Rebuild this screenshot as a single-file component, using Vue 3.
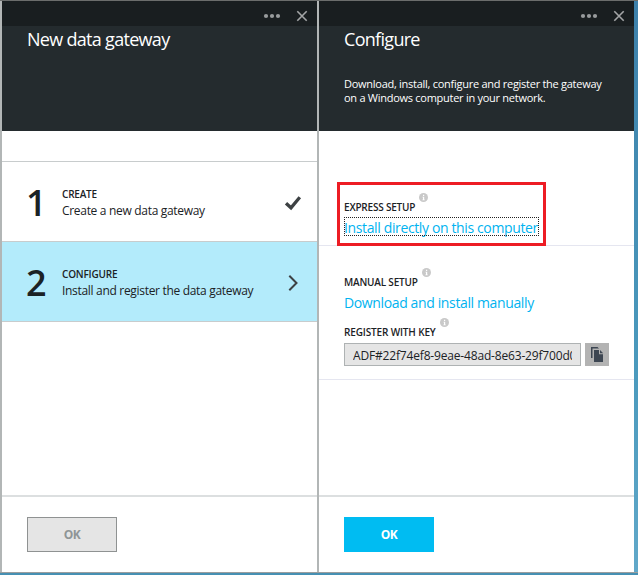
<script setup>
const steps = [
  { n: 1, label: 'CREATE', text: 'Create a new data gateway', done: true },
  { n: 2, label: 'CONFIGURE', text: 'Install and register the data gateway', done: false },
]
</script>

<template>
  <div class="desktop">
    <section class="blade">
      <header class="head">
        <div class="bar">
          <svg class="dots" width="18" height="6" viewBox="0 0 18 6"><circle cx="3" cy="3" r="2.1" /><circle cx="9" cy="3" r="2.1" /><circle cx="15" cy="3" r="2.1" /></svg>
          <svg class="close" width="12" height="12" viewBox="0 0 12 12"><path d="M1.3 1.3 10.7 10.7M10.7 1.3 1.3 10.7" /></svg>
        </div>
        <h1>New data gateway</h1>
      </header>
      <ol class="steps">
        <li v-for="s in steps" :key="s.n" class="step" :class="{ active: !s.done }">
          <span class="num">{{ s.n }}</span>
          <div class="step-body">
            <div class="step-label">{{ s.label }}</div>
            <div class="step-text">{{ s.text }}</div>
          </div>
          <svg v-if="s.done" class="mark" width="18" height="16" viewBox="0 0 18 16"><path class="check" d="M2 8.2 7 12.8 15.8 2.2" /></svg>
          <svg v-else class="mark" width="18" height="16" viewBox="0 0 18 16"><path class="chev" d="M5.3 .8 12.5 8 5.3 15.2" /></svg>
        </li>
      </ol>
      <footer class="foot"><button class="ok disabled">OK</button></footer>
    </section>

    <section class="blade">
      <header class="head">
        <div class="bar">
          <svg class="dots" width="18" height="6" viewBox="0 0 18 6"><circle cx="3" cy="3" r="2.1" /><circle cx="9" cy="3" r="2.1" /><circle cx="15" cy="3" r="2.1" /></svg>
          <svg class="close" width="12" height="12" viewBox="0 0 12 12"><path d="M1.3 1.3 10.7 10.7M10.7 1.3 1.3 10.7" /></svg>
        </div>
        <h1>Configure</h1>
        <p class="intro">Download, install, configure and register the gateway<br>on a Windows computer in your network.</p>
      </header>
      <div class="group express">
        <div class="label"><span>EXPRESS SETUP</span>
          <svg class="info" width="9" height="9" viewBox="0 0 9 9"><circle cx="4.5" cy="4.5" r="4.5" /><path d="M4 1.8h1.2v1.1H4zM3.5 3.8h1.7v2.6h.5v.8H3.4v-.8H4V4.6h-.5z" /></svg>
        </div>
        <a class="link focused">Install directly on this computer</a>
        <div class="callout"></div>
      </div>
      <div class="group manual">
        <div class="label"><span>MANUAL SETUP</span>
          <svg class="info" width="9" height="9" viewBox="0 0 9 9"><circle cx="4.5" cy="4.5" r="4.5" /><path d="M4 1.8h1.2v1.1H4zM3.5 3.8h1.7v2.6h.5v.8H3.4v-.8H4V4.6h-.5z" /></svg>
        </div>
        <a class="link">Download and install manually</a>
        <div class="label key-label"><span>REGISTER WITH KEY</span>
          <svg class="info" width="9" height="9" viewBox="0 0 9 9"><circle cx="4.5" cy="4.5" r="4.5" /><path d="M4 1.8h1.2v1.1H4zM3.5 3.8h1.7v2.6h.5v.8H3.4v-.8H4V4.6h-.5z" /></svg>
        </div>
        <div class="key-row">
          <div class="key"><span>ADF#22f74ef8-9eae-48ad-8e63-29f700d0</span></div>
          <button class="copy">
            <svg width="13" height="15" viewBox="0 0 13 15"><path d="M0 0h6.5L8 1.5H1.5V11H0z" /><path d="M3 3h5v4.2h4V15H3z" /><path d="M9 3 12.2 6.2H9z" /></svg>
          </button>
        </div>
      </div>
      <footer class="foot"><button class="ok">OK</button></footer>
    </section>
  </div>
</template>

<style>
body { margin: 0; overflow: hidden; }
</style>

<style scoped>
* { box-sizing: border-box; }
.desktop {
  width: 638px; height: 575px; display: flex; gap: 2px;
  padding: 1px 4px 3px 2px;
  font-family: "Open Sans", "Noto Sans", sans-serif; color: #1b2225;
  background:
    linear-gradient(#6b6d6c, #6b6d6c) 0 0 / 638px 1px no-repeat,
    linear-gradient(#4690b3, #4690b3) 0 573px / 638px 2px no-repeat,
    linear-gradient(#9c9e9e, #9c9e9e) 0 572px / 638px 1px no-repeat,
    linear-gradient(#3d80aa, #4b9abd 65%, #61a8c9) 634px 1px / 4px 571px no-repeat,
    #b2b6b6;
}
.blade { width: 315px; height: 571px; background: #fff; display: flex; flex-direction: column; white-space: nowrap; }
.head { height: 130px; background: #242b2e; flex: none; color: #fff; }
.bar { height: 25px; background: #191e20; display: flex; justify-content: flex-end; align-items: center; gap: 15px; padding: 5px 9px 0 0; }
.dots { fill: #989b9c; }
.close { stroke: #a3a5a6; stroke-width: 1.6; fill: none; }
h1 { margin: 0; padding-left: 25px; font-size: 18px; line-height: 26px; font-weight: 400; letter-spacing: -.7px; }
.intro { margin: 25px 0 0; padding-left: 25px; font-size: 11px; line-height: 14px; letter-spacing: -.27px; }
.steps { list-style: none; margin: 30px 0 0; padding: 0; border-top: 1px solid #c8cccd; }
.step { height: 80px; display: flex; align-items: center; border-bottom: 1px solid #c8cccd; padding: 3px 15px 0 25px; }
.active { background: #b3ebfb; }
.num { width: 36px; margin-left: -1px; font-size: 36px; line-height: 44px; font-weight: 600; }
.step-body { flex: 1; padding-top: 2px; }
.step-label { font-size: 10px; line-height: 13px; font-weight: 600; letter-spacing: -.2px; }
.step-text { font-size: 12px; line-height: 19px; letter-spacing: -.31px; }
.mark { fill: none; stroke: #3d4143; }
.check { stroke-width: 3.3; }
.chev { stroke-width: 2; }
.foot { margin-top: auto; height: 77px; flex: none; border-top: 2px solid #dcdfe0; padding: 20px 25px 0; }
.ok { display: block; width: 90px; height: 35px; padding: 0; border: 0; background: #00bcf2; color: #fff; font: 700 12px/35px "Open Sans", sans-serif; letter-spacing: -.6px; }
.disabled { background: #e5e5e5; border: 1px solid #8f9292; color: #8f9596; line-height: 33px; }
.group { padding-left: 25px; border-bottom: 1px solid #e5e6f0; flex: none; }
.express { height: 115px; padding-top: 61px; position: relative; }
.manual { height: 134px; padding-top: 21px; }
.label { display: flex; gap: 4px; height: 25px; font-size: 10px; font-weight: 600; line-height: 14px; padding-top: 8px; letter-spacing: -.2px; }
.info { margin-top: -7px; fill: #c9c9c9; }
.info path { fill: #fff; }
.link { display: block; width: 196px; height: 20px; font-size: 14px; line-height: 21px; letter-spacing: -.37px; color: #00b3f0; }
.focused { width: 195px; height: 19px; outline: 1px dotted #222; outline-offset: -1px; }
.callout { position: absolute; left: 18px; top: 51px; width: 209px; height: 64px; border: 3px solid #ed1c24; }
.key-label { margin-top: 5px; height: 26px; letter-spacing: -.15px; }
.key-row { display: flex; gap: 4px; }
.key { width: 237px; height: 23px; background: #e5e5e5; border: 1px solid #aeb2b3; padding: 0 8px; font-size: 12px; line-height: 23px; letter-spacing: -.17px; overflow: hidden; }
.key span { display: block; width: 219px; overflow: hidden; }
.copy { width: 24px; height: 23px; border: 0; padding: 0; background: #b3b3b3; display: flex; align-items: center; justify-content: center; fill: #3d4652; }
</style>
